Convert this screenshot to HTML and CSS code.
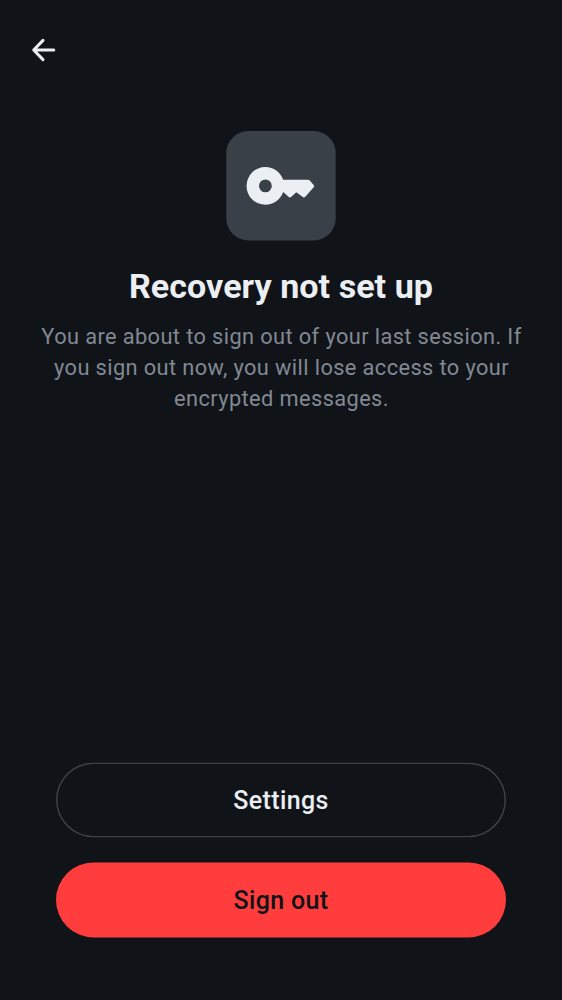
FILE: index.html
```html
<!DOCTYPE html>
<html lang="en">
<head>
<meta charset="utf-8">
<title>Recovery not set up</title>
<link rel="stylesheet" href="styles.css">
</head>
<body>
<main class="screen">
  <header class="topbar">
    <button class="back" aria-label="Back">
      <svg width="38" height="38" viewBox="0 0 38 38"><path d="M18 9.4 8.7 19l9.3 9.6M9 19h19.8" fill="none" stroke="currentColor" stroke-width="3" stroke-linecap="round" stroke-linejoin="round"/></svg>
    </button>
  </header>
  <section class="content">
    <svg class="tile" width="110" height="110" viewBox="0 0 110 110">
      <rect class="tile-back" x=".3" width="109.4" height="109.4" rx="22"/>
      <path class="tile-key" fill-rule="evenodd" d="M39.4 36.1c8.3 0 14.9 5 17.8 12.6h24.9q.8 0 1.4.6l4.2 4.6q.9 1.1 0 2.4l-8.4 9.5q-1.4 1.3-2.8 0l-6.2-4.5-5 4.5q-1.4 1.3-2.8 0L57.2 61c-2.9 7.6-9.5 12.8-17.8 12.8a18.85 18.85 0 0 1 0-37.7Zm0 12.4a6.4 6.4 0 1 0 0 12.8 6.4 6.4 0 0 0 0-12.8Z"/>
    </svg>
    <h1 class="title">Recovery not set up</h1>
    <p class="message">You are about to sign out of your last session. If<br>you sign out now, you will lose access to your<br>encrypted messages.</p>
  </section>
  <footer class="actions">
    <button class="button outlined">Settings</button>
    <button class="button danger">Sign out</button>
  </footer>
</main>
</body>
</html>
```
FILE: styles.css
```css
* { box-sizing: border-box; }
body { margin: 0; background: #101317; color: #ebeef2; font-family: Roboto, sans-serif; }
.screen { height: 1000px; display: flex; flex-direction: column; padding: 0 0 63px; }
.topbar { height: 100px; display: flex; align-items: center; padding-left: 25px; }
.back { display: flex; padding: 0; border: 0; background: none; color: inherit; }
.content { flex: 1; display: flex; flex-direction: column; align-items: center; padding-top: 31px; }
.tile { display: block; flex: none; }
.tile-back { fill: #3a4047; }
.tile-key { fill: #ebeef2; }
.title { margin: 23px 0 0; font-size: 34.1px; line-height: 44px; font-weight: 700; letter-spacing: .04px; white-space: nowrap; }
.message { margin: 13px 0 0; padding-left: 1px; color: #808994; font-size: 21.8px; line-height: 31.2px; letter-spacing: .39px; text-align: center; white-space: nowrap; }
.actions { display: flex; flex-direction: column; gap: 25px; padding: 0 56px; transform: translateY(.4px); }
.button { height: 75px; padding: 2px 0 0; border: 0; border-radius: 37.5px; font: 500 25px/37px Roboto, sans-serif; letter-spacing: .35px; }
.outlined { box-shadow: inset 0 0 0 1.5px #3e4045; background: none; color: #ebeef2; }
.danger { background: #ff3d3d; color: #101317; }
```
